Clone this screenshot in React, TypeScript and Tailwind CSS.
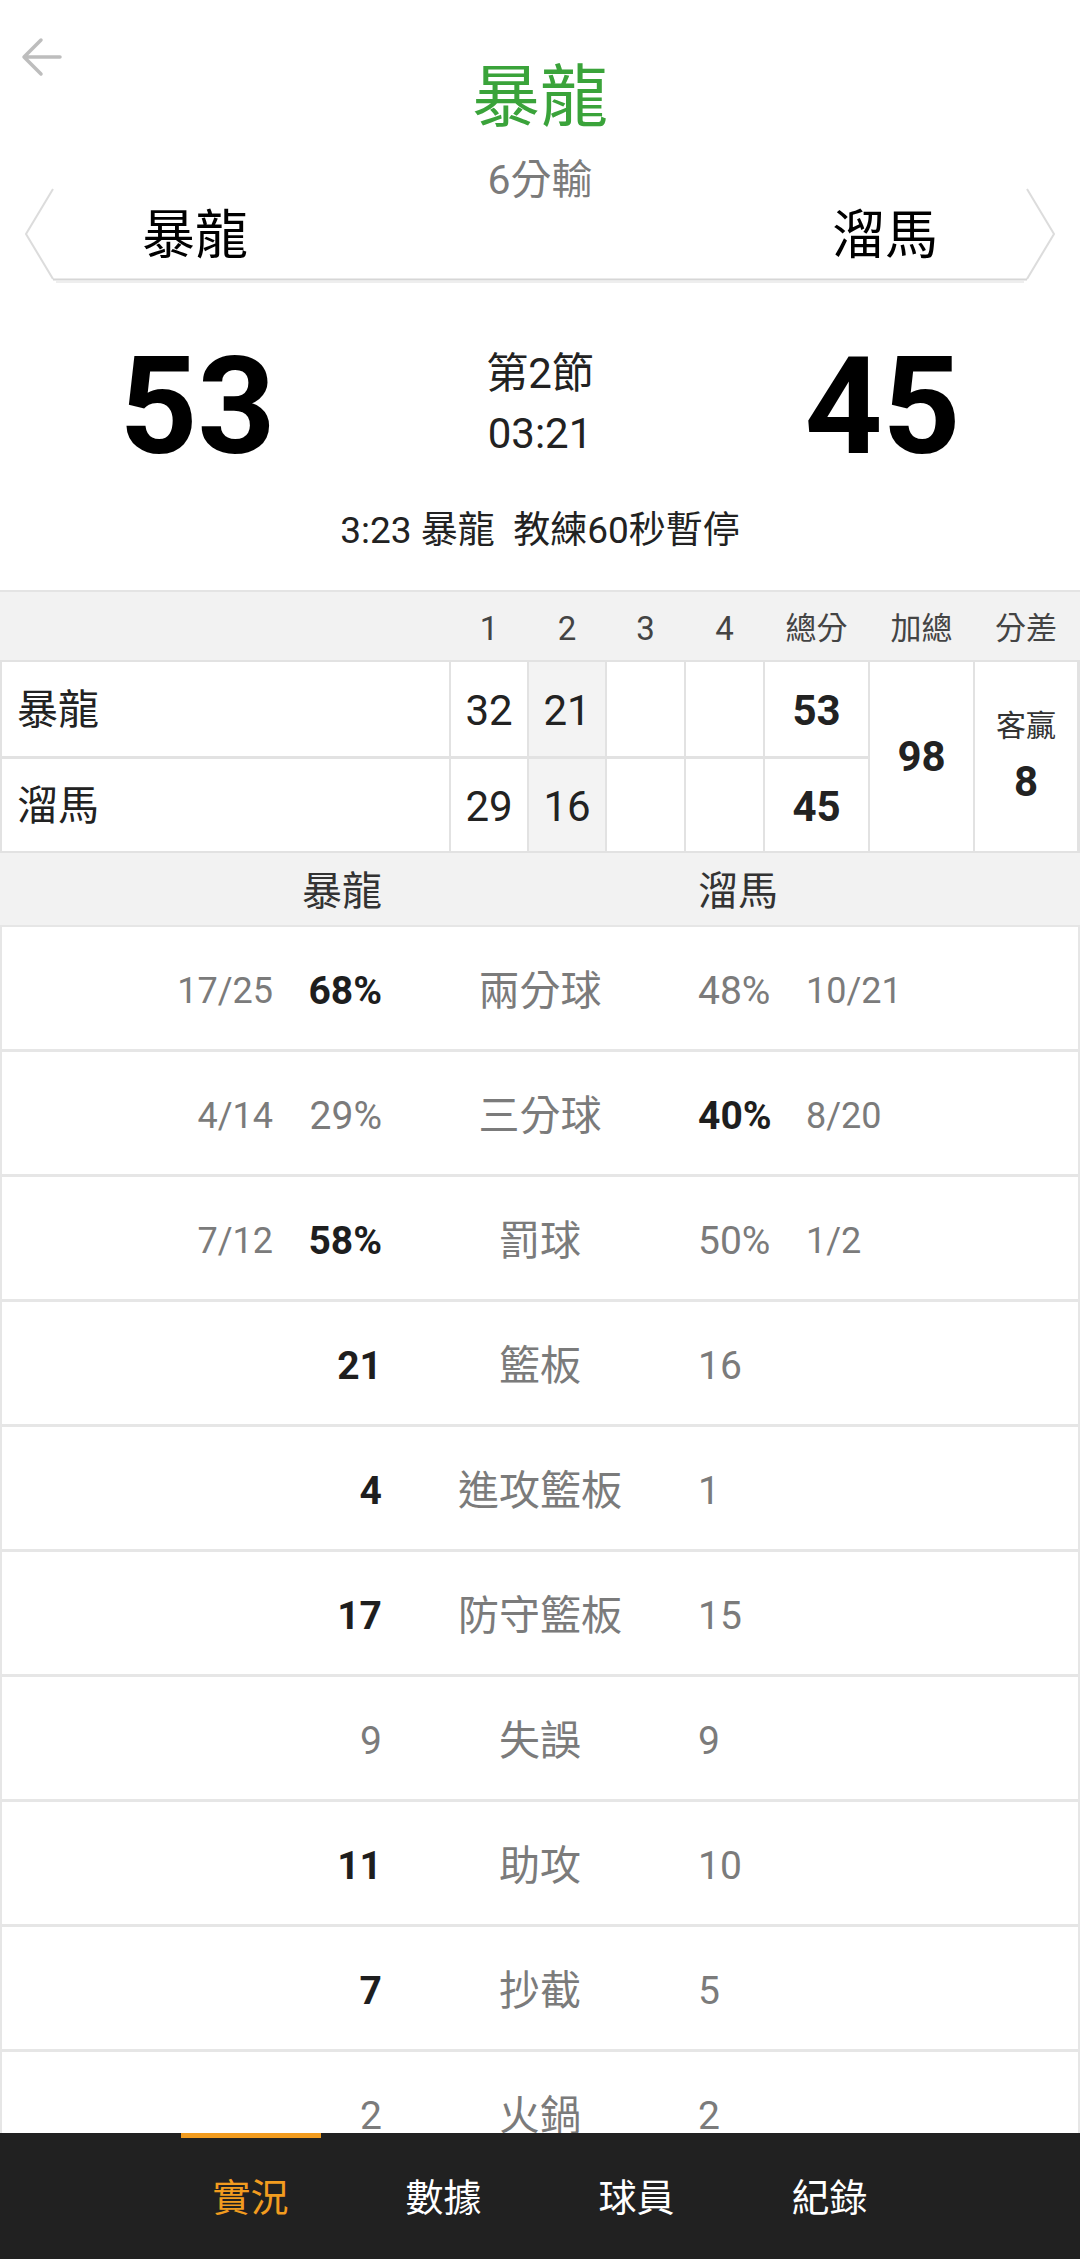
import React from 'react'

type Stat = {
    label: string
    lf?: string
    lv: string
    lb?: boolean
    rv: string
    rf?: string
    rb?: boolean
}

const stats: Stat[] = [
    { lf: '17/25', lv: '68%', lb: true, label: '兩分球', rv: '48%', rf: '10/21' },
    { lf: '4/14', lv: '29%', label: '三分球', rv: '40%', rf: '8/20', rb: true },
    { lf: '7/12', lv: '58%', lb: true, label: '罰球', rv: '50%', rf: '1/2' },
    { lv: '21', lb: true, label: '籃板', rv: '16' },
    { lv: '4', lb: true, label: '進攻籃板', rv: '1' },
    { lv: '17', lb: true, label: '防守籃板', rv: '15' },
    { lv: '9', label: '失誤', rv: '9' },
    { lv: '11', lb: true, label: '助攻', rv: '10' },
    { lv: '7', lb: true, label: '抄截', rv: '5' },
    { lv: '2', label: '火鍋', rv: '2' },
    { lv: '10', label: '犯規', rv: '12' },
]

const tabs = ['實況', '數據', '球員', '紀錄']

const valueClass = (bold?: boolean) =>
    bold ? 'font-bold text-[#1e1e1e]' : 'text-[#7b7b7b]'

const StatRow = ({ s }: { s: Stat }) => (
    <div className="h-[122px] pt-[6px] bg-white flex items-center shrink-0">
        {/* left team */}
        <div className="w-[380px] flex justify-end items-center">
            {s.lf && <span className="text-[36px] text-[#7b7b7b] leading-none">{s.lf}</span>}
            <span className={`w-[75px] ml-[34px] text-right text-[39px] leading-none ${valueClass(s.lb)}`}>
                {s.lv}
            </span>
        </div>
        <div className="w-[316px] text-center text-[41px] leading-none text-[#7b7b7b]">{s.label}</div>
        {/* right team */}
        <div className="flex items-center">
            <span className={`w-[75px] text-left text-[39px] leading-none ${valueClass(s.rb)}`}>{s.rv}</span>
            {s.rf && <span className="ml-[33px] text-[36px] text-[#7b7b7b] leading-none">{s.rf}</span>}
        </div>
    </div>
)

const App = () => {
    return (
        <div className="w-[1080px] h-[2259px] flex flex-col bg-white overflow-hidden font-[family-name:Roboto,'Noto_Sans_CJK_TC',sans-serif]">
            <div className="flex-1 min-h-0 overflow-hidden flex flex-col">
                {/* Top Header */}
                <div className="relative h-[590px] shrink-0">
                    <button className="absolute left-[20px] top-[36px] w-[44px] h-[44px]">
                        <svg viewBox="0 0 44 44" className="w-[44px] h-[44px]" fill="none" stroke="#bdbdbd" strokeWidth="3.5" strokeLinecap="round" strokeLinejoin="round">
                            <path d="M40 21H5M21 4L4 21l17 17" />
                        </svg>
                    </button>

                    <div className="pt-[64px] text-center text-[68px] leading-none text-[#3aa33a]">暴龍</div>
                    <div className="mt-[28px] text-center text-[41px] leading-none text-[#7b7b7b]">6分輸</div>

                    {/* Team Banner */}
                    <div className="relative -mt-[13px] h-[93px] flex items-center justify-between px-[142px] pt-[4px]">
                        <svg className="absolute inset-0 w-[1080px] h-[96px]" viewBox="0 0 1080 96" fill="none">
                            <path d="M53 1L26 46L53 91" stroke="#dcdcdc" strokeWidth="2" />
                            <path d="M1027 1L1054 46L1027 91" stroke="#dcdcdc" strokeWidth="2" />
                            <path d="M53 91.5H1027" stroke="#d6d6d6" strokeWidth="2" />
                            <path d="M56 94H1024" stroke="#eeeeee" strokeWidth="2" />
                        </svg>
                        <span className="relative text-[53px] leading-none text-black">暴龍</span>
                        <span className="relative text-[53px] leading-none text-black">溜馬</span>
                    </div>

                    {/* Score */}
                    <div className="mt-[58px] grid grid-cols-[395px_1fr_395px] items-center">
                        <div className="text-center text-[136px] leading-none font-bold text-black">53</div>
                        <div className="-mt-[6px] text-center text-[42px] leading-[60px] text-[#222]">
                            <div>第2節</div>
                            <div>03:21</div>
                        </div>
                        <div className="text-center text-[136px] leading-none font-bold text-black">45</div>
                    </div>

                    <div className="mt-[37px] text-center text-[37px] leading-none text-[#222] whitespace-pre">
                        3:23 暴龍  教練60秒暫停
                    </div>
                </div>

                {/* Quarter Table Header */}
                <div className="h-[70px] pt-[4px] shrink-0 bg-[#f2f2f2] border-t-2 border-[#e4e4e4] grid grid-cols-[447px_76px_76px_77px_77px_103px_103px_102px] gap-x-[2px] pl-[2px] items-center text-[#444] text-[33px] leading-none">
                    <div />
                    <div className="text-center">1</div>
                    <div className="text-center">2</div>
                    <div className="text-center">3</div>
                    <div className="text-center">4</div>
                    <div className="text-center text-[31px]">總分</div>
                    <div className="text-center text-[31px]">加總</div>
                    <div className="text-center text-[31px]">分差</div>
                </div>

                {/* Quarter Table */}
                <div className="shrink-0 bg-[#e2e2e2] grid grid-cols-[447px_76px_76px_77px_77px_103px_103px_102px] grid-rows-[94px_92px] gap-x-[2px] gap-y-[3px] pl-[2px] py-[2px] text-[42px] leading-none text-[#222]">
                    <div className="bg-white flex items-center pl-[15px] pt-[3px] text-[41px]">暴龍</div>
                    <div className="bg-white flex items-center justify-center pt-[3px]">32</div>
                    <div className="bg-[#f3f3f3] flex items-center justify-center pt-[3px]">21</div>
                    <div className="bg-white" />
                    <div className="bg-white" />
                    <div className="bg-white flex items-center justify-center pt-[3px] font-bold">53</div>
                    <div className="row-span-2 bg-white flex items-center justify-center font-bold">98</div>
                    <div className="row-span-2 bg-white flex flex-col items-center justify-center">
                        <span className="text-[30px] text-[#333]">客贏</span>
                        <span className="mt-[20px] font-bold">8</span>
                    </div>

                    <div className="bg-white flex items-center pl-[15px] pt-[3px] text-[41px]">溜馬</div>
                    <div className="bg-white flex items-center justify-center pt-[3px]">29</div>
                    <div className="bg-[#f3f3f3] flex items-center justify-center pt-[3px]">16</div>
                    <div className="bg-white" />
                    <div className="bg-white" />
                    <div className="bg-white flex items-center justify-center pt-[3px] font-bold">45</div>
                </div>

                {/* Team names for stats */}
                <div className="h-[72px] pt-[6px] shrink-0 bg-[#f2f2f2] flex items-center text-[40px] leading-none text-[#333]">
                    <div className="w-[382px] text-right">暴龍</div>
                    <div className="w-[316px]" />
                    <div>溜馬</div>
                </div>

                {/* Stats */}
                <div className="flex flex-col gap-[3px] bg-[#e6e6e6] px-[2px] pt-[2px]">
                    {stats.map((s) => (
                        <StatRow key={s.label} s={s} />
                    ))}
                </div>
            </div>

            {/* Bottom Tabs */}
            <nav className="h-[126px] shrink-0 bg-[#212121] flex justify-center">
                {tabs.map((t, i) => (
                    <div key={t} className="w-[193px] flex flex-col items-center">
                        <div className={`h-[5px] w-[140px] ${i === 0 ? 'bg-[#f29c1f]' : 'bg-transparent'}`} />
                        <span className={`mt-[41px] text-[38px] leading-none ${i === 0 ? 'text-[#f29c1f]' : 'text-white'}`}>
                            {t}
                        </span>
                    </div>
                ))}
            </nav>
        </div>
    )
}

export default App
